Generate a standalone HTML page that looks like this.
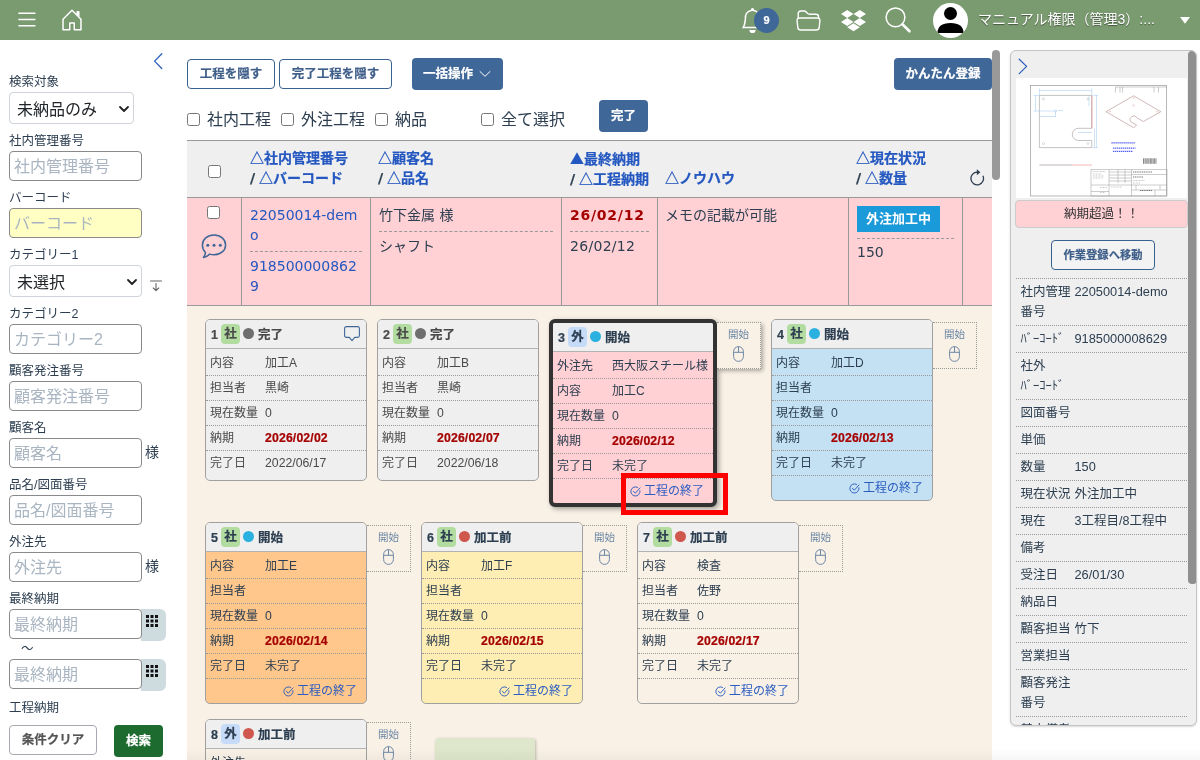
<!DOCTYPE html>
<html lang="ja">
<head>
<meta charset="utf-8">
<title>工程管理</title>
<style>
*{box-sizing:border-box;margin:0;padding:0}
html,body{width:1200px;height:760px;overflow:hidden;background:#fff}
body{will-change:transform;font-family:"Liberation Sans","Noto Sans CJK JP",sans-serif;font-size:12.5px;color:#2c3e50;position:relative;line-height:1.2}
.abs{position:absolute}
b,.btn,.tag,.th,#badge{-webkit-text-stroke:.22px currentColor}
/* header */
#hdr{position:absolute;left:0;top:0;width:1200px;height:40px;background:#7a9a70}
#hdr svg{position:absolute;overflow:visible}
#uname{position:absolute;left:978px;top:9px;font-size:14px;line-height:21px;color:#fff;white-space:nowrap;text-shadow:0 1px 1px rgba(0,0,0,.45)}
#badge{position:absolute;left:754px;top:8px;width:25px;height:25px;border-radius:50%;background:#3f6797;color:#fff;font-weight:bold;font-size:11px;line-height:25px;text-align:center}
/* sidebar */
#side{position:absolute;left:0;top:40px;width:187px;height:720px;background:#fff}
.lbl{position:absolute;left:9px;font-size:12.5px;line-height:16px;color:#2c3e50;white-space:nowrap}
.inp{position:absolute;left:9px;width:133px;height:30px;border:1px solid #8a8a8a;border-radius:4px;background:#fff;font-size:16px;line-height:28px;padding-left:4px;padding-top:1px;color:#a9b5c1;white-space:nowrap;overflow:hidden}
.sel{position:absolute;left:9px;height:32px;border:1px solid #ced4da;border-radius:4px;background:#fff;font-size:16px;line-height:29px;padding-left:7px;padding-top:2px;color:#212529;white-space:nowrap}
.sel svg{position:absolute;right:3px;top:10px}
.sama{position:absolute;left:145px;font-size:14px;line-height:20px;color:#2c3e50}
.cal{position:absolute;left:141px;width:25px;height:32px;background:#cfdcdf;border-radius:0 6px 6px 0}
.cal svg{position:absolute;left:5px;top:6px}
.btn{position:absolute;border-radius:4px;font-weight:bold;font-size:12.5px;text-align:center;white-space:nowrap}
.btn-o{border:1px solid #37618f;color:#3f5f8a;background:#fff}
.btn-p{background:#3f6797;color:#fff}
/* main */
#main{position:absolute;left:187px;top:40px;width:813px;height:720px}
.cb{position:absolute;width:13px;height:13px;border:1px solid #767676;border-radius:2.500px;background:#fff}
.cbl{position:absolute;top:69px;font-size:16px;line-height:22px;color:#2c3e50;white-space:nowrap}
#thead{position:absolute;left:0;top:100px;width:805px;height:57px;background:#efefef;border-top:1px solid #999}
.th{position:absolute;margin-top:-1px;font-size:14px;line-height:20.400px;white-space:nowrap;color:#2c3e50}
.th b{color:#2458c0}
.th i{font-style:normal;font-weight:bold;font-family:"DejaVu Sans",sans-serif}
.th u{text-decoration:none;font-family:"Noto Sans CJK JP",sans-serif}
#trow{position:absolute;left:0;top:157px;width:805px;height:109px;background:#ffd0d4;border-top:1px solid #999;border-bottom:1px solid #999}
.vl{position:absolute;top:0;width:1px;height:107px;background:#999}
.hl{position:absolute;height:0;border-top:1px dashed #999}
.td{position:absolute;top:7px;font-family:"DejaVu Sans","Noto Sans CJK JP",sans-serif;font-size:14px;line-height:20px;color:#2c3e50;white-space:nowrap}
.lnk{color:#2458c0}
#cards{position:absolute;left:0;top:266px;width:805px;height:454px;background:#f9f1e6;overflow:hidden}
#mscroll{position:absolute;left:805px;top:10px;width:8px;height:130px;border-radius:4px;background:#999}
#bgrad{position:absolute;left:187px;top:748px;width:1013px;height:12px;background:linear-gradient(to bottom,rgba(0,0,0,0),rgba(0,0,0,.035));pointer-events:none}
/*CARDCSS*/
.card{position:absolute;width:162px;border:1px solid #a0a0a0;border-radius:5px;overflow:hidden;font-size:12px;color:#2c3e50}
.card.gr{color:#4a4a4a}
.card.cur{width:168px;border:4px solid #333;border-radius:6px;box-shadow:2px 2px 5px rgba(0,0,0,.35)}
.ch{height:29px;border-bottom:1px solid #b2b2b2;background:#efefef;position:relative;font-size:12.500px;line-height:28px;white-space:nowrap}
.ch .no{position:absolute;left:5px;top:1px}
.ch .tag{position:absolute;left:15px;top:4px;width:19px;height:20px;border-radius:4px;line-height:20px;text-align:center;font-weight:bold;font-size:12.500px}
.ts{background:#b3dca1}
.tg{background:#c6dbf8}
.ch .dot{position:absolute;left:37px;top:8px;width:11px;height:11px;border-radius:50%}
.ch .st{position:absolute;left:52px;top:1px}
.ch .cm{position:absolute;left:138px;top:6px}
.cr{height:25px;border-bottom:1px dotted #999;position:relative;line-height:24px;white-space:nowrap}
.ch + .cr{height:27px;line-height:26px}
.ch + .cr .k,.ch + .cr .v{top:1px}
.cr.nb{border-bottom:0}
.cr .k{position:absolute;left:4px;top:0}
.cr .v{position:absolute;left:59px;top:0}
.rd{color:#a50000;font-size:12.250px;letter-spacing:.150px}
.lt{font-size:12.250px}
.lt2{font-size:12.800px}
.ce{height:24px;line-height:24px;text-align:right;padding-right:9px;color:#2b5cc0;font-size:12px;white-space:nowrap}
.ce svg{vertical-align:-2px;margin-right:3px;width:11px;height:11px}
.sb{position:absolute;width:44px;height:47px;border:1px dotted #999;border-left:0;background:#f9f1e6;text-align:center;color:#6c88a6;font-size:10.500px;line-height:12px;padding-top:5px}
.sb span{display:block}
.sb svg{display:block;margin:6px auto 0}
.sb.sh{box-shadow:2px 2px 4px rgba(0,0,0,.3)}
.gbox{position:absolute;width:100px;height:40px;background:#dee6cb;border-radius:4px;box-shadow:1px 1px 3px rgba(0,0,0,.25)}
.redbox{position:absolute;width:107px;height:42px;border:5px solid #f00}
/* right */
#right{position:absolute;left:1010px;top:50px;width:187px;height:676px;background:#efefef;border:1px solid #c4c4c4;border-radius:6px;overflow:hidden;box-shadow:0 1px 2px rgba(0,0,0,.15)}
#thumb{position:absolute;left:5px;top:27px;width:171px;height:120px;background:#fff}
#over{position:absolute;left:4px;top:149px;width:173px;height:28px;background:#ffd0d4;border:1px solid #ccc;border-radius:4px;text-align:center;font-size:12.500px;line-height:26px;color:#333}
#info{position:absolute;left:5px;top:227px;width:171px}
.ir{border-top:1px dotted #999;position:relative;font-size:12.500px;line-height:20px;color:#2c3e50;white-space:nowrap}
.ik{position:absolute;left:4.500px;top:3px;width:54px;white-space:normal;word-break:break-all}
.iv{position:absolute;left:58.500px;top:3px}
#rscroll{position:absolute;left:177px;top:0;width:9px;height:533px;border-radius:4px;background:#8f8f8f}
/*CARDCSS_END*/</style>
</head>
<body>
<div id="hdr">
  <!-- hamburger -->
  <svg style="left:18px;top:12px" width="18" height="15" viewBox="0 0 18 15"><path d="M0.9 1.250H16.900M0.9 7.400H16.900M0.9 13.750H16.900" stroke="#fff" stroke-width="1.500" stroke-linecap="round" fill="none"/></svg>
  <!-- home -->
  <svg style="left:60px;top:7.500px" width="24" height="24" viewBox="0 0 16 16"><path fill="#fff" d="M8.354 1.146a.5.5 0 0 0-.708 0l-6 6A.5.5 0 0 0 1.500 7.500v7a.5.5 0 0 0 .5.500h4.500a.5.500 0 0 0 .5-.5v-4h2v4a.5.5 0 0 0 .5.500H14a.5.500 0 0 0 .5-.5v-7a.5.5 0 0 0-.146-.354L13 5.793V2.500a.5.500 0 0 0-.5-.5h-1a.5.5 0 0 0-.5.500v1.293L8.354 1.146zM2.500 14V7.707l5.500-5.500 5.500 5.500V14H10v-4a.5.5 0 0 0-.5-.5h-3a.5.5 0 0 0-.5.500v4H2.500z"/></svg>
  <!-- bell -->
  <svg style="left:740px;top:8px" width="25" height="25" viewBox="0 0 16 16"><path fill="#fff" d="M8 16a2 2 0 0 0 2-2H6a2 2 0 0 0 2 2zM8 1.918l-.797.161A4.002 4.002 0 0 0 4 6c0 .628-.134 2.197-.459 3.742-.16.767-.376 1.566-.663 2.258h10.244c-.287-.692-.502-1.490-.663-2.258C12.134 8.197 12 6.628 12 6a4.002 4.002 0 0 0-3.203-3.920L8 1.917zM14.220 12c.223.447.481.801.780 1H1c.299-.199.557-.553.780-1C2.680 10.200 3 6.880 3 6c0-2.420 1.720-4.440 4.005-4.901a1 1 0 1 1 1.990 0A5.002 5.002 0 0 1 13 6c0 .880.320 4.200 1.220 6z"/></svg>
  <div id="badge">9</div>
  <!-- folder -->
  <svg style="left:796px;top:10px" width="25" height="21" viewBox="0 0 25 21"><path d="M2.2 8V3.6Q2.2 1 4.8 1H8.2Q9.4 1 10.2 1.9L11.6 3.4Q12.4 4.300 13.6 4.300H20Q22.600 4.300 22.600 6.900V8M3.600 8H21.400Q24.200 8 23.900 10.800L23.200 17.400Q22.900 20 20.300 20H4.700Q2.100 20 1.800 17.400L1.100 10.800Q0.800 8 3.600 8Z" fill="none" stroke="#fff" stroke-width="1.400" stroke-linejoin="round"/></svg>
  <!-- dropbox -->
  <svg style="left:841px;top:10px" width="25" height="21" viewBox="0 0 25 21"><path fill="#fff" d="M6.200 0L12.500 4 6.200 8 0 4zM18.800 0L25 4 18.800 8 12.500 4zM0 12L6.200 8 12.500 12 6.200 16zM18.800 8L25 12 18.800 16 12.500 12zM6.200 17.300L12.500 13.300 18.800 17.300 12.500 21.300z"/></svg>
  <!-- search -->
  <svg style="left:885px;top:7px" width="26" height="26" viewBox="0 0 26 26"><circle cx="10.500" cy="10.300" r="9.400" fill="none" stroke="#fff" stroke-width="1.500"/><path d="M17.400 17.300L24.500 24.300" stroke="#fff" stroke-width="2.600" stroke-linecap="round"/></svg>
  <!-- avatar -->
  <svg style="left:933px;top:3px" width="35" height="35" viewBox="0 0 35 35"><defs><clipPath id="avc"><circle cx="17.500" cy="17.500" r="17.500"/></clipPath></defs><circle cx="17.500" cy="17.500" r="17.500" fill="#fff"/><g clip-path="url(#avc)"><circle cx="17.500" cy="10.500" r="6.500" fill="#000"/><path d="M4.500 30Q4.500 20 17.500 20T30.500 30Z" fill="#000"/></g></svg>
  <div id="uname">マニュアル権限（管理3）:...</div>
  <svg style="left:1180px;top:17px" width="10" height="7" viewBox="0 0 10 7"><path d="M0 0H10L5 6.800Z" fill="#fff"/></svg>
</div>

<div id="side">
  <svg class="abs" style="left:152px;top:13px" width="11" height="17" viewBox="0 0 11 17"><path d="M9.800 0.700L2.600 8.100L9.800 15.500" fill="none" stroke="#2a5fc0" stroke-width="1.300" stroke-linecap="round" stroke-linejoin="round"/></svg>
  <div class="lbl" style="top:34px">検索対象</div>
  <div class="sel" style="top:52px;width:125px">未納品のみ<svg width="12" height="12" viewBox="0 0 12 12"><path d="M2 4L6 8L10 4" fill="none" stroke="#222" stroke-width="1.800" stroke-linecap="round" stroke-linejoin="round"/></svg></div>
  <div class="lbl" style="top:93px">社内管理番号</div>
  <div class="inp" style="top:111px">社内管理番号</div>
  <div class="lbl" style="top:150px">バーコード</div>
  <div class="inp" style="top:168px;background:#ffffc4">バーコード</div>
  <div class="lbl" style="top:207px">カテゴリー1</div>
  <div class="sel" style="top:225px;width:133px">未選択<svg width="12" height="12" viewBox="0 0 12 12"><path d="M2 4L6 8L10 4" fill="none" stroke="#222" stroke-width="1.800" stroke-linecap="round" stroke-linejoin="round"/></svg></div>
  <svg class="abs" style="left:150px;top:240px" width="12" height="12" viewBox="0 0 12 12"><path d="M0.500 1H11.500M6 3.500V10.500M3.300 8L6 10.700L8.700 8" fill="none" stroke="#666" stroke-width="1.100" stroke-linecap="round" stroke-linejoin="round"/></svg>
  <div class="lbl" style="top:266px">カテゴリー2</div>
  <div class="inp" style="top:284px">カテゴリー2</div>
  <div class="lbl" style="top:323px">顧客発注番号</div>
  <div class="inp" style="top:341px">顧客発注番号</div>
  <div class="lbl" style="top:380px">顧客名</div>
  <div class="inp" style="top:398px">顧客名</div>
  <div class="sama" style="top:402px">様</div>
  <div class="lbl" style="top:437px">品名/図面番号</div>
  <div class="inp" style="top:455px">品名/図面番号</div>
  <div class="lbl" style="top:494px">外注先</div>
  <div class="inp" style="top:512px">外注先</div>
  <div class="sama" style="top:516px">様</div>
  <div class="lbl" style="top:551px">最終納期</div>
  <div class="cal" style="top:569px"><svg width="12" height="12" viewBox="0 0 12 12"><path fill="#111" d="M0 0h3v3H0zM4.500 0h3v3h-3zM9 0h3v3H9zM0 4.500h3v3H0zM4.500 4.500h3v3h-3zM9 4.500h3v3H9zM0 9h3v3H0zM4.500 9h3v3h-3zM9 9h3v3H9z"/></svg></div>
  <div class="inp" style="top:569px">最終納期</div>
  <div class="lbl" style="top:601px;left:21px">〜</div>
  <div class="cal" style="top:619px"><svg width="12" height="12" viewBox="0 0 12 12"><path fill="#111" d="M0 0h3v3H0zM4.500 0h3v3h-3zM9 0h3v3H9zM0 4.500h3v3H0zM4.500 4.500h3v3h-3zM9 4.500h3v3H9zM0 9h3v3H0zM4.500 9h3v3h-3zM9 9h3v3H9z"/></svg></div>
  <div class="inp" style="top:619px">最終納期</div>
  <div class="lbl" style="top:660px">工程納期</div>
  <div class="btn" style="left:9px;top:685px;width:88px;height:30px;line-height:28px;border:1px solid #a6aab0;color:#555;background:#fff">条件クリア</div>
  <div class="btn" style="left:114px;top:685px;width:49px;height:32px;line-height:32px;background:#1d6b2f;color:#fff">検索</div>
</div>

<div id="main">
  <div class="btn btn-o" style="left:0;top:19px;width:88px;height:30px;line-height:28px">工程を隠す</div>
  <div class="btn btn-o" style="left:92px;top:19px;width:113px;height:30px;line-height:28px">完了工程を隠す</div>
  <div class="btn btn-p" style="left:225px;top:18px;width:91px;height:32px;line-height:32px;text-align:left;padding-left:11px">一括操作<svg class="abs" style="left:66.500px;top:12px" width="12" height="8" viewBox="0 0 12 8"><path d="M1 1.500L6 6.300L11 1.500" fill="none" stroke="#fff" stroke-width="1" stroke-linecap="round" stroke-linejoin="round"/></svg></div>
  <div class="btn btn-p" style="left:707px;top:18px;width:98px;height:32px;line-height:32px">かんたん登録</div>

  <span class="cb" style="left:0;top:73px"></span><div class="cbl" style="left:20px">社内工程</div>
  <span class="cb" style="left:94px;top:73px"></span><div class="cbl" style="left:114px">外注工程</div>
  <span class="cb" style="left:188px;top:73px"></span><div class="cbl" style="left:208px">納品</div>
  <span class="cb" style="left:294px;top:73px"></span><div class="cbl" style="left:314px">全て選択</div>
  <div class="btn btn-p" style="left:412px;top:60px;width:49px;height:32px;line-height:32px">完了</div>

  <div id="thead">
    <span class="cb" style="left:21px;top:24px"></span>
    <div class="th" style="left:63px;top:8px"><b>△社内管理番号</b><br><i>/</i> <b>△バーコード</b></div>
    <div class="th" style="left:191px;top:8px"><b>△顧客名</b><br><i>/</i> <b>△品名</b></div>
    <div class="th" style="left:383px;top:8px"><b><u>▲</u>最終納期</b><br><i>/</i> <b>△工程納期</b></div>
    <div class="th" style="left:478px;top:28px"><b>△ノウハウ</b></div>
    <div class="th" style="left:669px;top:8px"><b>△現在状況</b><br><i>/</i> <b>△数量</b></div>
    <svg class="abs" style="left:782px;top:28px" width="16" height="17" viewBox="0 0 16 17"><path d="M8.200 3.200A6.300 6.300 0 1 0 13.900 6.800" fill="none" stroke="#2c3e50" stroke-width="1.300"/><path d="M7.800 0.200L11.400 3.200L7.800 6.200Z" fill="#2c3e50"/></svg>
  </div>

  <div id="trow">
    <i class="vl" style="left:54px"></i><i class="vl" style="left:183px"></i><i class="vl" style="left:374px"></i><i class="vl" style="left:470px"></i><i class="vl" style="left:661px"></i><i class="vl" style="left:775px"></i>
    <span class="cb" style="left:20px;top:8px"></span>
    <svg class="abs" style="left:14px;top:36px" width="26" height="25" viewBox="0 0 26 25"><path d="M13 1C19.600 1 24.600 5.400 24.600 10.900S19.600 20.800 13 20.800C11.500 20.800 10 20.600 8.700 20.100C7.200 21.600 5 22.900 2.400 23.400C3.700 21.900 4.400 20 4.400 18.200C2.400 16.400 1.400 13.800 1.400 10.900C1.400 5.400 6.400 1 13 1Z" fill="none" stroke="#3f6797" stroke-width="1.500" stroke-linejoin="round"/><circle cx="6.800" cy="11.200" r="1.500" fill="#3f6797"/><circle cx="13" cy="11.200" r="1.500" fill="#3f6797"/><circle cx="19.300" cy="11.200" r="1.500" fill="#3f6797"/></svg>
    <div class="td lnk" style="left:63px;width:113px;white-space:normal;word-break:break-all">22050014-demo</div>
    <i class="hl" style="left:63px;top:53px;width:112px"></i>
    <div class="td lnk" style="left:63px;top:58px;width:113px;white-space:normal;word-break:break-all">9185000008629</div>
    <div class="td" style="left:192px">竹下金属 様</div>
    <i class="hl" style="left:192px;top:33px;width:174px"></i>
    <div class="td" style="left:192px;top:38px">シャフト</div>
    <div class="td" style="left:383px;color:#a50000;font-weight:bold;letter-spacing:.75px">26/02/12</div>
    <i class="hl" style="left:383px;top:33px;width:79px"></i>
    <div class="td" style="left:383px;top:38px;letter-spacing:.3px">26/02/12</div>
    <div class="td" style="left:478px">メモの記載が可能</div>
    <div class="abs" style="left:670px;top:8px;width:83px;height:26px;background:#1b9ad9;color:#fff;font-weight:bold;font-size:13px;line-height:25px;text-align:center">外注加工中</div>
    <i class="hl" style="left:670px;top:40px;width:97px"></i>
    <div class="td" style="left:670px;top:44px">150</div>
  </div>

  <div id="cards">
<!--CARDS-->
<div class="card gr" style="left:18px;top:13px;background:#efefef;height:162px"><div class="ch"><b class="no">1</b><span class="tag ts">社</span><i class="dot" style="background:#6e6e6e"></i><b class="st">完了</b><svg class="cm" width="16" height="16" viewBox="0 0 16 16"><path d="M2.500 0.600H13.500Q15.400 0.600 15.400 2.500V9.500Q15.400 11.400 13.500 11.400H10.700L8 14.600L5.300 11.400H2.500Q0.600 11.400 0.600 9.500V2.500Q0.600 0.600 2.500 0.600Z" fill="none" stroke="#3f6797" stroke-width="1.100" stroke-linejoin="round"/></svg></div><div class="cr"><span class="k">内容</span><span class="v">加工A</span></div><div class="cr"><span class="k">担当者</span><span class="v">黒崎</span></div><div class="cr"><span class="k">現在数量</span><span class="v"><span class="lt">0</span></span></div><div class="cr"><span class="k">納期</span><span class="v"><b class="rd">2026/02/02</b></span></div><div class="cr nb"><span class="k">完了日</span><span class="v"><span class="lt">2022/06/17</span></span></div></div>
<div class="card gr" style="left:190px;top:13px;background:#efefef;height:162px"><div class="ch"><b class="no">2</b><span class="tag ts">社</span><i class="dot" style="background:#6e6e6e"></i><b class="st">完了</b></div><div class="cr"><span class="k">内容</span><span class="v">加工B</span></div><div class="cr"><span class="k">担当者</span><span class="v">黒崎</span></div><div class="cr"><span class="k">現在数量</span><span class="v"><span class="lt">0</span></span></div><div class="cr"><span class="k">納期</span><span class="v"><b class="rd">2026/02/07</b></span></div><div class="cr nb"><span class="k">完了日</span><span class="v"><span class="lt">2022/06/18</span></span></div></div>
<div class="card cur" style="left:362px;top:13px;background:#ffd0d4"><div class="ch"><b class="no">3</b><span class="tag tg">外</span><i class="dot" style="background:#2bb1e0"></i><b class="st">開始</b></div><div class="cr"><span class="k">外注先</span><span class="v">西大阪スチール様</span></div><div class="cr"><span class="k">内容</span><span class="v">加工C</span></div><div class="cr"><span class="k">現在数量</span><span class="v"><span class="lt">0</span></span></div><div class="cr"><span class="k">納期</span><span class="v"><b class="rd">2026/02/12</b></span></div><div class="cr"><span class="k">完了日</span><span class="v">未完了</span></div><div class="ce"><svg width="12" height="12" viewBox="0 0 12 12"><path d="M10.900 5.200A5 5 0 1 1 8.300 1.500" fill="none" stroke="#2b5cc0" stroke-width="1" stroke-linecap="round"/><path d="M3.700 5.700L5.800 7.900L10.900 2.100" fill="none" stroke="#2b5cc0" stroke-width="1" stroke-linecap="round" stroke-linejoin="round"/></svg>工程の終了</div></div>
<div class="sb sh" style="left:530px;top:16px"><span>開始</span><svg width="11" height="16" viewBox="0 0 11 16"><path d="M5.500 0.600C8.200 0.600 10.400 2.800 10.400 5.500V10.500C10.400 13.200 8.200 15.400 5.500 15.400S0.600 13.200 0.600 10.500V5.500C0.600 2.800 2.800 0.600 5.500 0.600ZM0.600 6.300H10.400M5.500 0.600V6.300" fill="none" stroke="#6c88a6" stroke-width="1"/></svg></div>
<div class="card" style="left:584px;top:13px;background:#c4e1f4"><div class="ch"><b class="no">4</b><span class="tag ts">社</span><i class="dot" style="background:#2bb1e0"></i><b class="st">開始</b></div><div class="cr"><span class="k">内容</span><span class="v">加工D</span></div><div class="cr"><span class="k">担当者</span><span class="v"></span></div><div class="cr"><span class="k">現在数量</span><span class="v"><span class="lt">0</span></span></div><div class="cr"><span class="k">納期</span><span class="v"><b class="rd">2026/02/13</b></span></div><div class="cr"><span class="k">完了日</span><span class="v">未完了</span></div><div class="ce"><svg width="12" height="12" viewBox="0 0 12 12"><path d="M10.900 5.200A5 5 0 1 1 8.300 1.500" fill="none" stroke="#2b5cc0" stroke-width="1" stroke-linecap="round"/><path d="M3.700 5.700L5.800 7.900L10.900 2.100" fill="none" stroke="#2b5cc0" stroke-width="1" stroke-linecap="round" stroke-linejoin="round"/></svg>工程の終了</div></div>
<div class="sb" style="left:746px;top:16px"><span>開始</span><svg width="11" height="16" viewBox="0 0 11 16"><path d="M5.500 0.600C8.200 0.600 10.400 2.800 10.400 5.500V10.500C10.400 13.200 8.200 15.400 5.500 15.400S0.600 13.200 0.600 10.500V5.500C0.600 2.800 2.800 0.600 5.500 0.600ZM0.600 6.300H10.400M5.500 0.600V6.300" fill="none" stroke="#6c88a6" stroke-width="1"/></svg></div>
<div class="card" style="left:18px;top:216px;background:#ffc78c"><div class="ch"><b class="no">5</b><span class="tag ts">社</span><i class="dot" style="background:#2bb1e0"></i><b class="st">開始</b></div><div class="cr"><span class="k">内容</span><span class="v">加工E</span></div><div class="cr"><span class="k">担当者</span><span class="v"></span></div><div class="cr"><span class="k">現在数量</span><span class="v"><span class="lt">0</span></span></div><div class="cr"><span class="k">納期</span><span class="v"><b class="rd">2026/02/14</b></span></div><div class="cr"><span class="k">完了日</span><span class="v">未完了</span></div><div class="ce"><svg width="12" height="12" viewBox="0 0 12 12"><path d="M10.900 5.200A5 5 0 1 1 8.300 1.500" fill="none" stroke="#2b5cc0" stroke-width="1" stroke-linecap="round"/><path d="M3.700 5.700L5.800 7.900L10.900 2.100" fill="none" stroke="#2b5cc0" stroke-width="1" stroke-linecap="round" stroke-linejoin="round"/></svg>工程の終了</div></div>
<div class="sb" style="left:180px;top:219px"><span>開始</span><svg width="11" height="16" viewBox="0 0 11 16"><path d="M5.500 0.600C8.200 0.600 10.400 2.800 10.400 5.500V10.500C10.400 13.200 8.200 15.400 5.500 15.400S0.600 13.200 0.600 10.500V5.500C0.600 2.800 2.800 0.600 5.500 0.600ZM0.600 6.300H10.400M5.500 0.600V6.300" fill="none" stroke="#6c88a6" stroke-width="1"/></svg></div>
<div class="card" style="left:234px;top:216px;background:#ffeeb4"><div class="ch"><b class="no">6</b><span class="tag ts">社</span><i class="dot" style="background:#d0574d"></i><b class="st">加工前</b></div><div class="cr"><span class="k">内容</span><span class="v">加工F</span></div><div class="cr"><span class="k">担当者</span><span class="v"></span></div><div class="cr"><span class="k">現在数量</span><span class="v"><span class="lt">0</span></span></div><div class="cr"><span class="k">納期</span><span class="v"><b class="rd">2026/02/15</b></span></div><div class="cr"><span class="k">完了日</span><span class="v">未完了</span></div><div class="ce"><svg width="12" height="12" viewBox="0 0 12 12"><path d="M10.900 5.200A5 5 0 1 1 8.300 1.500" fill="none" stroke="#2b5cc0" stroke-width="1" stroke-linecap="round"/><path d="M3.700 5.700L5.800 7.900L10.900 2.100" fill="none" stroke="#2b5cc0" stroke-width="1" stroke-linecap="round" stroke-linejoin="round"/></svg>工程の終了</div></div>
<div class="sb" style="left:396px;top:219px"><span>開始</span><svg width="11" height="16" viewBox="0 0 11 16"><path d="M5.500 0.600C8.200 0.600 10.400 2.800 10.400 5.500V10.500C10.400 13.200 8.200 15.400 5.500 15.400S0.600 13.200 0.600 10.500V5.500C0.600 2.800 2.800 0.600 5.500 0.600ZM0.600 6.300H10.400M5.500 0.600V6.300" fill="none" stroke="#6c88a6" stroke-width="1"/></svg></div>
<div class="card" style="left:450px;top:216px;background:#f9f1e6"><div class="ch"><b class="no">7</b><span class="tag ts">社</span><i class="dot" style="background:#d0574d"></i><b class="st">加工前</b></div><div class="cr"><span class="k">内容</span><span class="v">検査</span></div><div class="cr"><span class="k">担当者</span><span class="v">佐野</span></div><div class="cr"><span class="k">現在数量</span><span class="v"><span class="lt">0</span></span></div><div class="cr"><span class="k">納期</span><span class="v"><b class="rd">2026/02/17</b></span></div><div class="cr"><span class="k">完了日</span><span class="v">未完了</span></div><div class="ce"><svg width="12" height="12" viewBox="0 0 12 12"><path d="M10.900 5.200A5 5 0 1 1 8.300 1.500" fill="none" stroke="#2b5cc0" stroke-width="1" stroke-linecap="round"/><path d="M3.700 5.700L5.800 7.900L10.900 2.100" fill="none" stroke="#2b5cc0" stroke-width="1" stroke-linecap="round" stroke-linejoin="round"/></svg>工程の終了</div></div>
<div class="sb" style="left:612px;top:219px"><span>開始</span><svg width="11" height="16" viewBox="0 0 11 16"><path d="M5.500 0.600C8.200 0.600 10.400 2.800 10.400 5.500V10.500C10.400 13.200 8.200 15.400 5.500 15.400S0.600 13.200 0.600 10.500V5.500C0.600 2.800 2.800 0.600 5.500 0.600ZM0.600 6.300H10.400M5.500 0.600V6.300" fill="none" stroke="#6c88a6" stroke-width="1"/></svg></div>
<div class="card" style="left:18px;top:413px;background:#f9f1e6"><div class="ch"><b class="no">8</b><span class="tag tg">外</span><i class="dot" style="background:#d0574d"></i><b class="st">加工前</b></div><div class="cr"><span class="k">外注先</span><span class="v"></span></div><div class="cr nb"><span class="k">内容</span><span class="v"></span></div></div>
<div class="sb" style="left:180px;top:416px"><span>開始</span><svg width="11" height="16" viewBox="0 0 11 16"><path d="M5.500 0.600C8.200 0.600 10.400 2.800 10.400 5.500V10.500C10.400 13.200 8.200 15.400 5.500 15.400S0.600 13.200 0.600 10.500V5.500C0.600 2.800 2.800 0.600 5.500 0.600ZM0.600 6.300H10.400M5.500 0.600V6.300" fill="none" stroke="#6c88a6" stroke-width="1"/></svg></div>
<div class="gbox" style="left:248px;top:432px"></div>
<div class="redbox" style="left:434px;top:167px"></div>
<!--CARDS_END-->
  </div>
  <div id="mscroll"></div>
</div>

<!--MAIN_END-->
<div id="bgrad"></div>
<!--RIGHT-->
<div id="right">
<svg class="abs" style="left:7px;top:7px" width="10" height="17" viewBox="0 0 10 17"><path d="M1.200 1.200L8.600 8.400L1.200 15.600" fill="none" stroke="#2a5fc0" stroke-width="1.250" stroke-linecap="round" stroke-linejoin="round"/></svg>
<div id="thumb"><svg width="171" height="120" viewBox="0 0 171 120" style="position:absolute;left:0;top:0">
<rect x="14.500" y="7.500" width="136" height="110.500" fill="#fff" stroke="#999" stroke-width="0.700"/>
<!-- plate -->
<path d="M75.800 50.300V17.400H23.400V69.600H75.800V62.500H62.400A6.100 6.100 0 0 1 62.400 50.300H75.800" fill="none" stroke="#9a9a9a" stroke-width="0.600"/>
<path d="M75.800 17.400V50.300" stroke="#e09a9a" stroke-width="0.800"/>
<g fill="none" stroke="#9cc4ee" stroke-width="0.500">
<path d="M23.400 12.400H75.800M23.400 10.500V17M75.800 10.500V17M19.500 17.400V33M17.500 17.400H23M17.500 33H38M23.400 38.500H39.500M39.500 33V39M80.500 17.400V69.600M77 17.400H82M77 69.600H82M78.500 50.300V69.600M62 54.500H76M73 17.400V28"/>
<circle cx="39.500" cy="33" r="1.200"/><path d="M42 32.500H47"/>
</g>
<g fill="none" stroke="#aaa" stroke-width="0.400"><circle cx="27.500" cy="21" r="1"/><circle cx="72" cy="21" r="1"/><circle cx="27.500" cy="65.500" r="1"/><circle cx="72" cy="65.500" r="1"/></g>
<!-- iso -->
<path d="M90 33.700L117.600 17.800L144.800 33.700L127.400 43.500L121 39.800A3.600 3.600 0 0 0 114.500 43.600L120.600 47.100L117.600 49.700Z" fill="none" stroke="#b08a8a" stroke-width="0.600"/>
<g fill="none" stroke="#d99" stroke-width="0.400"><circle cx="117.500" cy="27.500" r="0.800"/><circle cx="94" cy="33.700" r="0.600"/><circle cx="141" cy="33.700" r="0.600"/><circle cx="117.600" cy="20" r="0.600"/></g>
<!-- blue notes -->
<g stroke="#5560f2" stroke-width="1.300" stroke-dasharray="1.400 0.600"><path d="M95.400 64.800H119.500M97 70.200H119.500M97 73.400H117"/></g>
<!-- barcode -->
<g stroke="#555" stroke-width="0.700"><path d="M127.500 80.300V85.800M129 80.300V85.800M130.200 80.300V85.800M131.800 80.300V85.800M133 80.300V85.800M134.600 80.300V85.800M135.800 80.300V85.800M137.200 80.300V85.800M138.600 80.300V85.800M140 80.300V85.800"/></g>
<path d="M23.400 87H56" stroke="#bdb5b5" stroke-width="1.200"/><path d="M56 87H75.800" stroke="#f2b8b8" stroke-width="1.200"/>
<!-- title block -->
<g fill="none" stroke="#999" stroke-width="0.500">
<rect x="75" y="91.500" width="76" height="26.500"/>
<path d="M75 107H151M93 91.500V107M102 91.500V105M109 91.500V105M115.500 91.500V118M115.500 96.500H151M75 113.500H93M93 107V118M115.500 112H151M120 107V112M144 107V112M139 112V118M93 94H115.500M93 97H115.500M93 100H115.500M93 103H115.500"/>
<path d="M99.500 9H151M99.500 9V14.500M104 9V14.500M106.500 9V14.500M138 9V14.500M142.500 9V14.500"/>
</g>
<g stroke="#666" stroke-width="0.900" stroke-dasharray="1.200 0.600"><path d="M117 94H136M117 99H127M124 112.500H136"/></g>
<g stroke="#aaa" stroke-width="0.600" stroke-dasharray="1 0.500"><path d="M76.500 93.500H90M77 96H86M77 98H88M77 100H87M117 102.500H129M117 105H124M95 109H106M84 109.500H91M84 114.500H89"/></g>
</svg>
</div>
<div id="over">納期超過！！</div>
<div class="btn btn-o" style="left:40px;top:189px;width:104px;height:30px;line-height:28px;background:#f3f3f3;font-size:11.300px">作業登録へ移動</div>
<div id="info">
<div class="ir" style="height:47px"><span class="ik">社内管理番号</span><span class="iv lt2">22050014-demo</span></div>
<div class="ir" style="height:27px"><span class="ik">ﾊﾞｰｺｰﾄﾞ</span><span class="iv lt2">9185000008629</span></div>
<div class="ir" style="height:47px"><span class="ik">社外<br>ﾊﾞｰｺｰﾄﾞ</span><span class="iv"></span></div>
<div class="ir" style="height:27px"><span class="ik">図面番号</span><span class="iv"></span></div>
<div class="ir" style="height:27px"><span class="ik">単価</span><span class="iv"></span></div>
<div class="ir" style="height:27px"><span class="ik">数量</span><span class="iv lt2">150</span></div>
<div class="ir" style="height:27px"><span class="ik">現在状況</span><span class="iv">外注加工中</span></div>
<div class="ir" style="height:27px"><span class="ik">現在</span><span class="iv">3工程目/8工程中</span></div>
<div class="ir" style="height:27px"><span class="ik">備考</span><span class="iv"></span></div>
<div class="ir" style="height:27px"><span class="ik">受注日</span><span class="iv lt2">26/01/30</span></div>
<div class="ir" style="height:27px"><span class="ik">納品日</span><span class="iv"></span></div>
<div class="ir" style="height:27px"><span class="ik">顧客担当</span><span class="iv">竹下</span></div>
<div class="ir" style="height:27px"><span class="ik">営業担当</span><span class="iv"></span></div>
<div class="ir" style="height:47px"><span class="ik">顧客発注番号</span><span class="iv"></span></div>
<div class="ir" style="height:27px"><span class="ik">基本備考</span><span class="iv"></span></div>
</div>
<div id="rscroll"></div>
</div>
<!--RIGHT_END-->
</body>
</html>
